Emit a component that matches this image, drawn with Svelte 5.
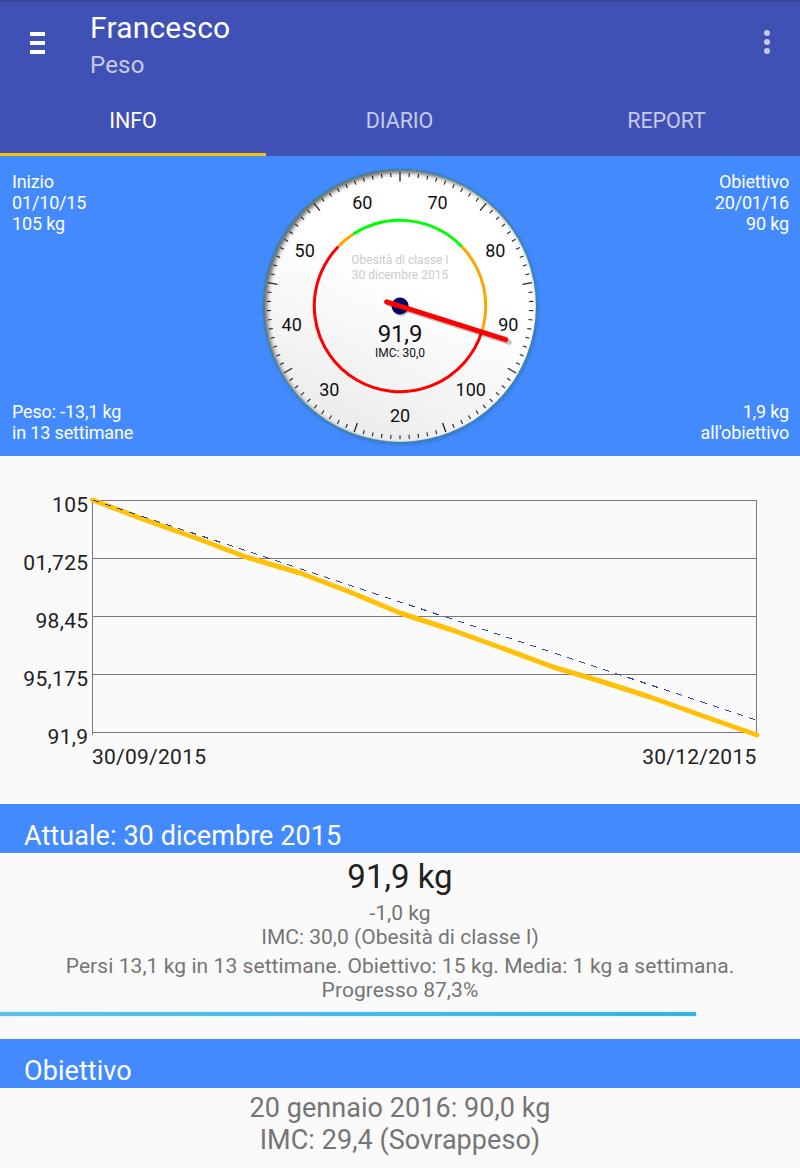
<script lang="ts">
	interface Band {
		from: number;
		to: number;
		color: string;
	}

	const tabs = ['INFO', 'DIARIO', 'REPORT'];

	// Dial: 360° cover 90 kg, with 65 kg at the top.
	const CENTER = 144;
	const weight = 91.9;
	const labels = [20, 30, 40, 50, 60, 70, 80, 90, 100];
	const ticks = Array.from({ length: 90 }, (_, i) => ({ angle: i * 4, major: i % 10 === 0 }));
	const bands: Band[] = [
		{ from: 91.8, to: 143.5, color: '#f00' },
		{ from: 53.5, to: 56.7, color: '#ffa500' },
		{ from: 56.7, to: 76.6, color: '#0f0' },
		{ from: 76.6, to: 91.8, color: '#ffa500' }
	];

	const angleOf = (kg: number) => (kg - 65) * 4;

	function polar(angle: number, r: number) {
		const a = (angle * Math.PI) / 180;
		return { x: CENTER + r * Math.sin(a), y: CENTER - r * Math.cos(a) };
	}

	function arc({ from, to }: Band) {
		const a = polar(angleOf(from), 85.7);
		const b = polar(angleOf(to), 85.7);
		const large = (to - from) * 4 > 180 ? 1 : 0;
		return `M${a.x} ${a.y}A85.7 85.7 0 ${large} 1 ${b.x} ${b.y}`;
	}

	// Weight chart
	const rows = [
		{ y: 44.5, label: '105' },
		{ y: 102.5, label: '01,725' },
		{ y: 160.5, label: '98,45' },
		{ y: 218.5, label: '95,175' },
		{ y: 276.5, label: '91,9' }
	];
	const measured =
		'92.5,44 148,65 196,82 246,101 300,117 350,136 400,157 452,174 502,192 553,211 600,225 650,241 703,260 757,279';

	const progress = 87;
</script>

<div class="app">
	<header class="bar">
		<div class="bar__top">
			<svg class="bar__menu" width="15" height="22" viewBox="0 0 15 22" fill="#fff">
				<rect width="15" height="4" />
				<rect y="9" width="15" height="4" />
				<rect y="18" width="15" height="4" />
			</svg>
			<div class="bar__titles">
				<div class="bar__title">Francesco</div>
				<div class="bar__subtitle">Peso</div>
			</div>
			<svg class="bar__more" width="6" height="24" viewBox="0 0 6 24" fill="#c5cae9">
				<circle cx="3" cy="3" r="3" />
				<circle cx="3" cy="12" r="3" />
				<circle cx="3" cy="21" r="3" />
			</svg>
		</div>
		<nav class="tabs">
			{#each tabs as tab, i (tab)}
				<div class="tabs__item" class:tabs__item--on={i === 0}>{tab}</div>
			{/each}
		</nav>
	</header>

	<section class="gauge">
		<div class="gauge__side">
			<p>Inizio<br />01/10/15<br />105 kg</p>
			<p>Peso: -13,1 kg<br />in 13 settimane</p>
		</div>

		<svg class="dial" width="288" height="288" viewBox="0 0 288 288">
			<defs>
				<linearGradient id="face" x1="0.7" y1="0.2" x2="0.35" y2="1">
					<stop offset="0.3" stop-color="#fff" />
					<stop offset="1" stop-color="#ebebeb" />
				</linearGradient>
				<filter id="soft" x="-10%" y="-10%" width="120%" height="120%">
					<feGaussianBlur stdDeviation="2" />
				</filter>
				<clipPath id="rim"><circle cx="144" cy="144" r="136.5" /></clipPath>
			</defs>
			<circle cx="145" cy="145.5" r="136" fill="#174a80" opacity="0.55" filter="url(#soft)" />
			<circle cx="144" cy="144" r="137" fill="url(#face)" />
			<g clip-path="url(#rim)">
				<circle cx="146.5" cy="146.5" r="139" fill="none" stroke="#222" stroke-width="6" opacity="0.75" filter="url(#soft)" />
			</g>
			<circle cx="144" cy="144" r="136.7" fill="none" stroke="#3784ad" stroke-width="1.6" />

			{#each ticks as t (t.angle)}
				{@const a = polar(t.angle, t.major ? 134 : 133.3)}
				{@const b = polar(t.angle, t.major ? 124.5 : 129.2)}
				<line x1={a.x} y1={a.y} x2={b.x} y2={b.y} stroke="#222" stroke-width={t.major ? 1.3 : 1.1} />
			{/each}
			{#each labels as kg (kg)}
				{@const p = polar(angleOf(kg), 110)}
				<text class="dial__label" x={p.x} y={p.y + 6}>{kg}</text>
			{/each}
			{#each bands as band (band.from)}
				<path d={arc(band)} fill="none" stroke={band.color} stroke-width="3" />
			{/each}

			<text class="dial__note" x="144" y="102">Obesità di classe I</text>
			<text class="dial__note" x="144" y="117">30 dicembre 2015</text>
			<text class="dial__value" x="144" y="180">91,9</text>
			<text class="dial__imc" x="144" y="195">IMC: 30,0</text>

			<circle cx="145" cy="145.5" r="8.5" fill="#000" opacity="0.25" />
			<circle cx="144" cy="144" r="8.5" fill="#00006b" />
			<g stroke-width="5" stroke-linecap="round">
				<line
					x1="144"
					y1="159"
					x2="144"
					y2="32"
					stroke="#000"
					opacity="0.22"
					transform="translate(2.5 2.5) rotate({angleOf(weight)} 144 144)"
				/>
				<line x1="144" y1="158" x2="144" y2="33" stroke="#f00" transform="rotate({angleOf(weight)} 144 144)" />
			</g>
		</svg>

		<div class="gauge__side gauge__side--end">
			<p>Obiettivo<br />20/01/16<br />90 kg</p>
			<p>1,9 kg<br />all'obiettivo</p>
		</div>
	</section>

	<svg class="chart" width="800" height="348" viewBox="0 0 800 348">
		{#each rows as row (row.label)}
			<line class="chart__grid" x1="92" y1={row.y} x2="757" y2={row.y} />
			<text class="chart__label" x="88.5" y={row.y + 11.5} text-anchor="end">{row.label}</text>
		{/each}
		<line class="chart__grid" x1="92.5" y1="44" x2="92.5" y2="279" />
		<line class="chart__grid" x1="756.5" y1="44" x2="756.5" y2="277" />
		<polyline points={measured} fill="none" stroke="#ffc107" stroke-width="5" stroke-linecap="round" stroke-linejoin="round" />
		<line class="chart__plan" x1="93" y1="44" x2="756" y2="264" />
		<text class="chart__label chart__label--date" x="92" y="308">30/09/2015</text>
		<text class="chart__label chart__label--date" x="756.5" y="308" text-anchor="end">30/12/2015</text>
	</svg>

	<h2 class="heading">Attuale: 30 dicembre 2015</h2>
	<section class="current">
		<div class="current__weight">91,9 kg</div>
		<p>-1,0 kg<br />IMC: 30,0 (Obesità di classe I)</p>
		<p class="current__summary">
			Persi 13,1 kg in 13 settimane. Obiettivo: 15 kg. Media: 1 kg a settimana.<br />Progresso 87,3%
		</p>
		<div class="progress"><div class="progress__bar" style="width: {progress}%"></div></div>
	</section>

	<h2 class="heading">Obiettivo</h2>
	<section class="goal">20 gennaio 2016: 90,0 kg<br />IMC: 29,4 (Sovrappeso)</section>
</div>

<style>
	:global(body) {
		background: #fafafa;
	}

	.app {
		width: 800px;
		height: 1168px;
		overflow: hidden;
		background: #fafafa;
		font-family: Roboto, sans-serif;
		color: #757575;
	}

	p {
		margin: 0;
	}

	.bar {
		height: 156px;
		box-sizing: border-box;
		background: linear-gradient(#303e8a, #3c4dac 2px, #3f51b5 10px);
	}

	.bar__top {
		display: flex;
		height: 86px;
		padding: 0 30px;
	}

	.bar__menu {
		margin-top: 32px;
	}

	.bar__titles {
		flex: 1;
		margin-left: 45px;
		padding-top: 10px;
	}

	.bar__title {
		color: #fff;
		font-size: 30px;
		letter-spacing: 0.2px;
		line-height: 36px;
	}

	.bar__subtitle {
		color: #c5cae9;
		font-size: 24px;
		letter-spacing: 0.2px;
		line-height: 38px;
	}

	.bar__more {
		margin-top: 30px;
	}

	.tabs {
		display: grid;
		grid-template-columns: 266px 267px 267px;
		height: 70px;
	}

	.tabs__item {
		height: 70px;
		box-sizing: border-box;
		border-bottom: 3px solid transparent;
		color: #c5cae9;
		font-size: 21.5px;
		letter-spacing: -0.1px;
		line-height: 70px;
		text-align: center;
	}

	.tabs__item--on {
		border-color: #ffc107;
		color: #fff;
	}

	.gauge {
		display: flex;
		justify-content: space-between;
		height: 300px;
		box-sizing: border-box;
		padding: 6px 11px 6px 12px;
		background: #448aff;
		color: #fff;
	}

	.gauge__side {
		display: flex;
		flex-direction: column;
		justify-content: space-between;
		width: 244px;
		box-sizing: border-box;
		padding: 9px 0 7px;
		font-size: 18px;
		letter-spacing: -0.16px;
		line-height: 21px;
	}

	.gauge__side--end {
		width: 245px;
		text-align: right;
	}

	.dial text {
		text-anchor: middle;
		fill: #111;
	}

	.dial .dial__label {
		font-size: 18px;
	}

	.dial .dial__note {
		font-size: 12px;
		fill: #ccc;
	}

	.dial .dial__value {
		font-size: 24px;
		letter-spacing: -0.2px;
	}

	.dial .dial__imc {
		font-size: 12px;
	}

	.chart {
		display: block;
	}

	.chart__grid {
		stroke: #777;
		shape-rendering: crispEdges;
	}

	.chart__label {
		font-size: 21px;
		letter-spacing: 0.35px;
		fill: #212121;
	}

	.chart__label--date {
		letter-spacing: 0.25px;
	}

	.chart__plan {
		stroke: #303f9f;
		stroke-dasharray: 6.4 6.4;
		shape-rendering: crispEdges;
	}

	.heading {
		height: 49px;
		margin: 0;
		padding: 9px 24px 0;
		box-sizing: border-box;
		background: #448aff;
		color: #fff;
		font-size: 27px;
		font-weight: 400;
		letter-spacing: 0.07px;
		line-height: 47px;
	}

	.current {
		height: 186px;
		font-size: 21px;
		line-height: 24px;
		text-align: center;
	}

	.current__weight {
		padding: 4px 0;
		color: #212121;
		font-size: 33px;
		line-height: 40px;
	}

	.current__summary {
		margin-top: 5px;
		letter-spacing: 0.07px;
	}

	.progress {
		margin-top: 10px;
	}

	.progress__bar {
		height: 4px;
		background: linear-gradient(90deg, #5fc1e6, #33b5e5);
		box-shadow: 0 0 2px #a5dcf2;
	}

	.goal {
		padding-top: 4px;
		font-size: 27px;
		letter-spacing: 0.05px;
		line-height: 32px;
		text-align: center;
	}
</style>
